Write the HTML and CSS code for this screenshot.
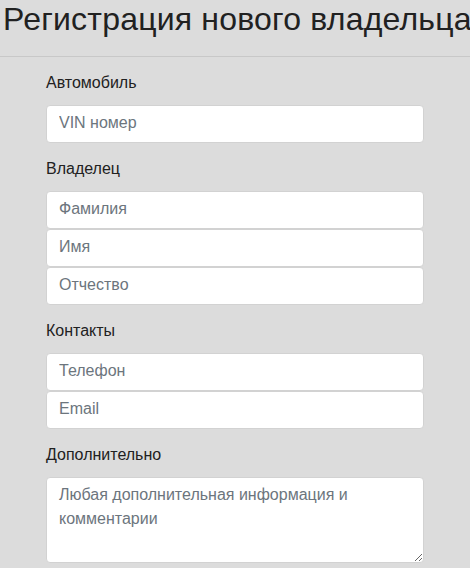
FILE: index.html
```html
<!DOCTYPE html>
<html lang="ru">
  <head>
    <meta charset="utf-8" />
    <title>Регистрация нового владельца</title>
    <link rel="stylesheet" href="styles.css">
  </head>
  <body>
    <h1 class="title">Регистрация нового владельца</h1>

    <form class="form">
      <!-- машина -->
      <div class="group">
        <label class="label" for="vin">Автомобиль</label>
        <input class="field" id="vin" type="text" placeholder="VIN номер" />
      </div>

      <!-- ФИО владельца -->
      <div class="group">
        <label class="label" for="lastname">Владелец</label>
        <div class="stack">
          <input class="field" id="lastname" type="text" placeholder="Фамилия" />
          <input class="field" type="text" placeholder="Имя" />
          <input class="field" type="text" placeholder="Отчество" />
        </div>
      </div>

      <div class="group">
        <label class="label" for="phone">Контакты</label>
        <div class="stack">
          <input class="field" id="phone" type="tel" placeholder="Телефон" />
          <input class="field" type="email" placeholder="Email" />
        </div>
      </div>

      <div class="group">
        <label class="label" for="notes">Дополнительно</label>
        <textarea class="field notes" id="notes" placeholder="Любая дополнительная информация и комментарии"></textarea>
      </div>
    </form>
  </body>
</html>
```

FILE: styles.css
```css
body {
  margin: 0;
  background-color: #dcdcdc;
  font-family: "Liberation Sans", Arial, sans-serif;
  color: #212121;
  overflow: hidden;
}

/* заголовок страницы */
.title {
  margin: 0;
  padding: 0 0 18px 3px;
  font-size: 32px;
  font-weight: normal;
  line-height: 38px;
  letter-spacing: 0.2px;
  white-space: nowrap;
  border-bottom: 1px solid #c8c8c8;
}

/* форма */
.form {
  display: flex;
  flex-direction: column;
  gap: 15px;
  width: 378px;
  padding: 15px 0 0 46px;
}
.group {
  display: flex;
  flex-direction: column;
}
.label {
  font-size: 16px;
  line-height: 22px;
  margin-bottom: 11px;
}
.stack {
  display: flex;
  flex-direction: column;
}

.field {
  box-sizing: border-box;
  height: 38px;
  margin: 0;
  padding: 5px 12px 7px;
  font-family: inherit;
  font-size: 16px;
  line-height: 24px;
  color: #495057;
  background-color: #fff;
  border: 1px solid #d2d2d2;
  border-radius: 4px;
  outline: none;
}
.field::placeholder {
  color: #6c757d;
}
.notes {
  height: 86px;
  resize: vertical;
}
```
